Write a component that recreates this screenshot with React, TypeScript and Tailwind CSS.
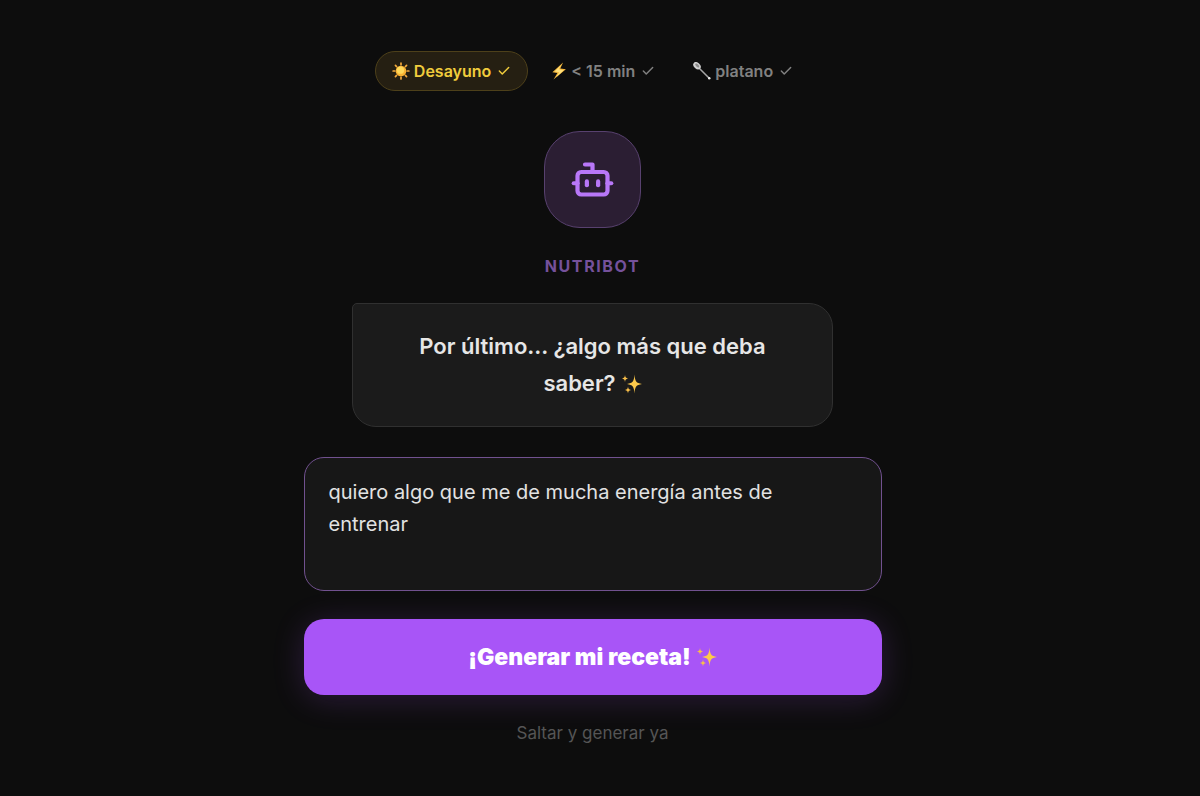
import { useState } from "react";
import type { ReactNode } from "react";
import { Bot, Check } from "lucide-react";

function SunIcon() {
  return (
    <svg viewBox="0 0 32 32" className="size-[18px] shrink-0" aria-hidden="true">
      <g stroke="#f3a93c" strokeWidth="3" strokeLinecap="round">
        <path d="M16 2v3M16 27v3M2 16h3M27 16h3M6.1 6.1l2.1 2.1M23.8 23.8l2.1 2.1M6.1 25.9l2.1-2.1M23.8 8.2l2.1-2.1" />
      </g>
      <circle cx="16" cy="16" r="9.5" fill="#f9b233" />
      <circle cx="15" cy="14.5" r="6.5" fill="#ffd95a" />
    </svg>
  );
}

function BoltIcon() {
  return (
    <svg viewBox="0 0 32 32" className="size-[18px] shrink-0" aria-hidden="true">
      <path d="M25 1 6 18l9 1.500L8 31 30 13l-10-1.500z" fill="#f5b83d" />
      <path d="M22 5 10 17l8 1-5 9 13-12.500-9-1.500z" fill="#ffe07a" />
    </svg>
  );
}

function SpoonIcon() {
  return (
    <svg viewBox="0 0 36 36" className="size-[18px] shrink-0" aria-hidden="true">
      <path d="m12 12 20 20" stroke="#a5a5a5" strokeWidth="3" strokeLinecap="round" />
      <circle cx="32.500" cy="32.500" r="2.500" fill="#f0f0f0" />
      <ellipse cx="8" cy="7.500" rx="8.500" ry="6" transform="rotate(42 8 7.500)" fill="#d0d0d0" />
      <ellipse cx="8.500" cy="7" rx="5" ry="2.500" transform="rotate(42 8.500 7)" fill="#8a8a8a" />
    </svg>
  );
}

function SparklesIcon() {
  return (
    <svg viewBox="0 0 40 40" className="size-5 shrink-0" aria-hidden="true">
      <path d="M25 1c1.200 14 3 17 15 19-12 2-13.800 5-15 19-1.200-14-3-17-15-19 12-2 13.800-5 15-19z" fill="#fdc94b" />
      <path d="M6 2c.5 5 2 6 6 7-4 1-5.500 2-6 7-.5-5-2-6-6-7 4-1 5.500-2 6-7zM12 25c.5 5 2 6 6 7-4 1-5.500 2-6 7-.5-5-2-6-6-7 4-1 5.500-2 6-7z" fill="#f8be49" />
    </svg>
  );
}

interface StepChipProps {
  icon: ReactNode;
  label: string;
  active?: boolean;
}

function StepChip({ icon, label, active = false }: StepChipProps) {
  return (
    <button
      type="button"
      className={
        active
          ? "flex h-10 items-center gap-1 rounded-full border border-[#4d401a] bg-[#251f12] px-4 text-base font-semibold text-[#f0cc3c]"
          : "flex h-10 items-center gap-1 rounded-full border border-transparent px-4 text-base font-semibold text-[#818181]"
      }
    >
      {icon}
      <span>{label}</span>
      <Check className="ml-0.5 size-3.5 shrink-0" strokeWidth={2.5} />
    </button>
  );
}

export default function App() {
  const [notes, setNotes] = useState("quiero algo que me de mucha energía antes de entrenar");

  return (
    <main className="flex min-h-screen flex-col items-center bg-[#0d0d0d] pt-[51px] pr-[15px] pb-10 font-['Inter','Liberation_Sans',sans-serif]">
      <nav className="flex flex-wrap justify-center gap-1">
        <StepChip icon={<SunIcon />} label="Desayuno" active />
        <StepChip icon={<BoltIcon />} label="< 15 min" />
        <StepChip icon={<SpoonIcon />} label="platano" />
      </nav>

      <div className="mt-10 flex size-[97px] items-center justify-center rounded-[36px] border border-[#58416f] bg-[#2b1e33] text-[#b877f8]">
        <Bot size={45} strokeWidth={2.25} />
      </div>
      <p className="mt-[26px] text-base leading-6 font-bold tracking-widest text-[#75519b] uppercase">Nutribot</p>

      <div className="mt-[25px] w-full max-w-[481px] rounded-3xl rounded-tl-[5px] border border-[#303030] bg-[#1b1b1b] px-12 py-6">
        <label htmlFor="notes" className="block text-center text-[22px] leading-[37px] font-semibold text-[#e6e6e6]">
          Por último... ¿algo más que deba{" "}
          <span className="inline-flex items-center gap-1.5">
            saber? <SparklesIcon />
          </span>
        </label>
      </div>

      <form className="mt-[30px] flex w-full max-w-[578px] flex-col items-center" onSubmit={(e) => e.preventDefault()}>
        <textarea
          id="notes"
          rows={3}
          value={notes}
          onChange={(e) => setNotes(e.target.value)}
          className="block w-full resize-none rounded-[20px] border border-[#71518f] bg-[#171717] px-6 py-[18px] text-[20px] leading-8 text-[#e2e2e2] outline-none"
        />
        <button
          type="submit"
          className="mt-7 flex h-[76px] w-full items-center justify-center gap-1.5 rounded-[20px] bg-[#a855f7] text-[23px] font-black text-white shadow-[0_4px_32px_rgba(168,85,247,0.2)]"
        >
          ¡Generar mi receta!
          <SparklesIcon />
        </button>
        <button type="button" className="mt-[26px] text-[17px] leading-6 text-[#555555]">
          Saltar y generar ya
        </button>
      </form>
    </main>
  );
}
